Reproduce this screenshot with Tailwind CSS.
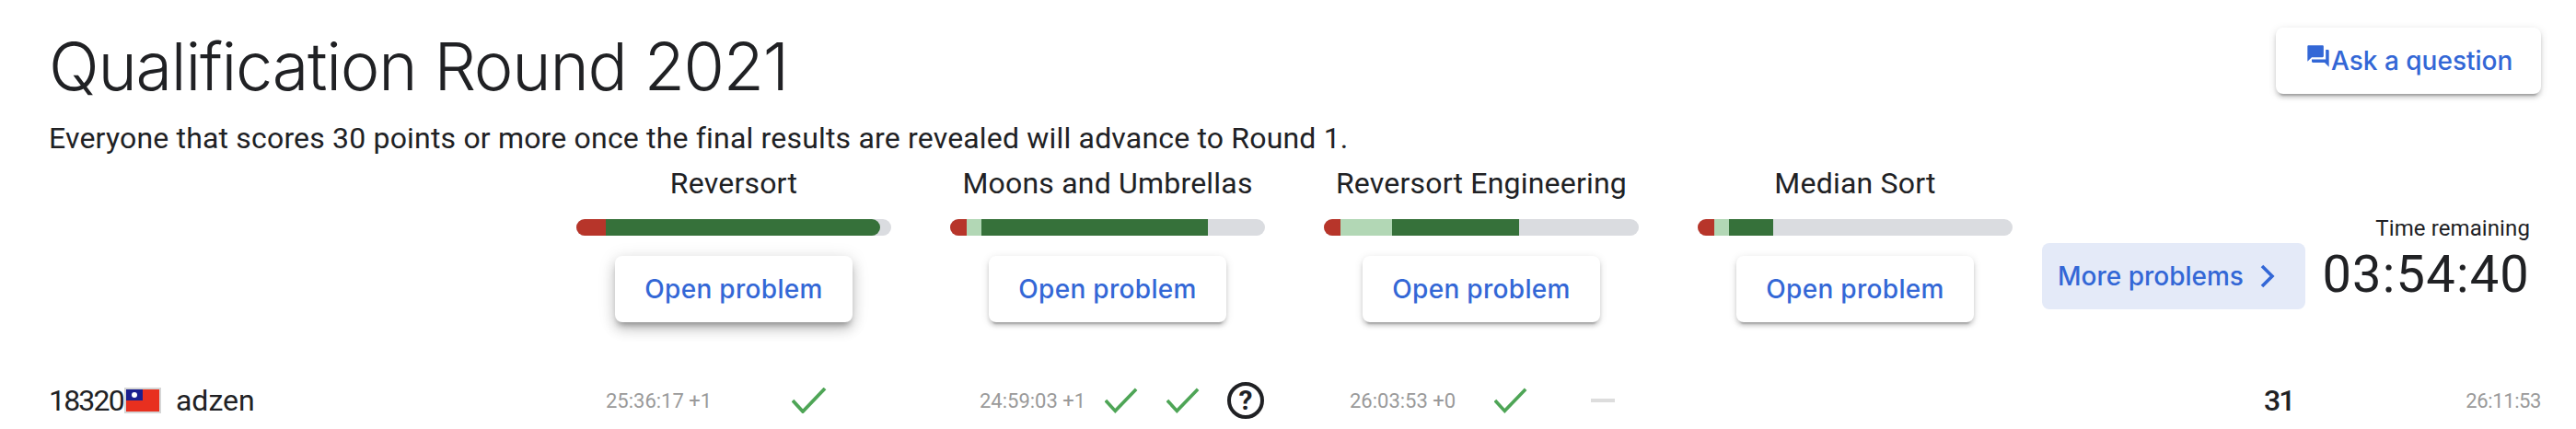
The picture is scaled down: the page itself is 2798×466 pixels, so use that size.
<!DOCTYPE html>
<html lang="en">
<head>
<meta charset="utf-8">
<script src="https://cdn.jsdelivr.net/npm/@tailwindcss/browser@4"></script>
</head>
<body class="bg-white">
<div class="w-[2798px] h-[466px] overflow-hidden pl-[53px] pr-[38px] pt-[30px] font-['Roboto',sans-serif] text-[#202124]">
  <header class="flex justify-between items-start h-[100px]">
    <h1 class="text-[72px] leading-[84px] font-light font-['Inter',sans-serif] tracking-[-1.25px]">Qualification Round 2021</h1>
    <button class="flex items-center h-[72px] w-[288px] px-[32px] rounded-[8px] bg-white text-[#3367d6] text-[28px] font-medium font-['Inter',sans-serif] whitespace-nowrap shadow-[0_6px_2px_-4px_rgba(0,0,0,.2),0_4px_4px_0_rgba(0,0,0,.14),0_2px_10px_0_rgba(0,0,0,.12)]">
      <svg class="w-[28px] h-[28px] shrink-0 -mt-[10px]" viewBox="0 0 24 24" fill="currentColor"><path d="M21 6h-2v9H6v2c0 .55.45 1 1 1h11l4 4V7c0-.55-.45-1-1-1zm-4 6V3c0-.55-.45-1-1-1H3c-.55 0-1 .45-1 1v14l4-4h10c.55 0 1-.45 1-1z"/></svg>
      <span>Ask a question</span>
    </button>
  </header>
  <p class="text-[32px] leading-[40px] tracking-[.18px]">Everyone that scores 30 points or more once the final results are revealed will advance to Round 1.</p>
  <section class="flex mt-[10px]">
    <div class="w-[573px] shrink-0"></div>
    <div class="flex gap-[64px]">
      <article class="w-[342px] flex flex-col items-center">
        <h2 class="text-[32px] leading-[38px] h-[38px] tracking-[.2px]">Reversort</h2>
        <div class="flex w-full h-[18px] mt-[20px] rounded-full overflow-hidden bg-[#dadce0]">
          <div class="w-[32px] bg-[#b7352a]"></div>
          <div class="w-[298px] bg-[#36713a] rounded-r-full"></div>
        </div>
        <button class="w-[258px] h-[72px] mt-[22px] rounded-[8px] bg-white text-[#3367d6] text-[28px] font-medium font-['Inter',sans-serif] tracking-[.3px] shadow-[0_6px_6px_-3px_rgba(0,0,0,.3),0_8px_14px_1px_rgba(0,0,0,.14),0_3px_18px_2px_rgba(0,0,0,.1)]">Open problem</button>
      </article>
      <article class="w-[342px] flex flex-col items-center">
        <h2 class="text-[32px] leading-[38px] h-[38px] tracking-[.2px]">Moons and Umbrellas</h2>
        <div class="flex w-full h-[18px] mt-[20px] rounded-full overflow-hidden bg-[#dadce0]">
          <div class="w-[18px] bg-[#b7352a]"></div>
          <div class="w-[16px] bg-[#b2d7b5]"></div>
          <div class="w-[246px] bg-[#36713a]"></div>
        </div>
        <button class="w-[258px] h-[72px] mt-[22px] rounded-[8px] bg-white text-[#3367d6] text-[28px] font-medium font-['Inter',sans-serif] tracking-[.3px] shadow-[0_6px_2px_-4px_rgba(0,0,0,.2),0_4px_4px_0_rgba(0,0,0,.14),0_2px_10px_0_rgba(0,0,0,.12)]">Open problem</button>
      </article>
      <article class="w-[342px] flex flex-col items-center">
        <h2 class="text-[32px] leading-[38px] h-[38px] tracking-[.2px]">Reversort Engineering</h2>
        <div class="flex w-full h-[18px] mt-[20px] rounded-full overflow-hidden bg-[#dadce0]">
          <div class="w-[18px] bg-[#b7352a]"></div>
          <div class="w-[56px] bg-[#b2d7b5]"></div>
          <div class="w-[138px] bg-[#36713a]"></div>
        </div>
        <button class="w-[258px] h-[72px] mt-[22px] rounded-[8px] bg-white text-[#3367d6] text-[28px] font-medium font-['Inter',sans-serif] tracking-[.3px] shadow-[0_6px_2px_-4px_rgba(0,0,0,.2),0_4px_4px_0_rgba(0,0,0,.14),0_2px_10px_0_rgba(0,0,0,.12)]">Open problem</button>
      </article>
      <article class="w-[342px] flex flex-col items-center">
        <h2 class="text-[32px] leading-[38px] h-[38px] tracking-[.2px]">Median Sort</h2>
        <div class="flex w-full h-[18px] mt-[20px] rounded-full overflow-hidden bg-[#dadce0]">
          <div class="w-[18px] bg-[#b7352a]"></div>
          <div class="w-[16px] bg-[#b2d7b5]"></div>
          <div class="w-[48px] bg-[#36713a]"></div>
        </div>
        <button class="w-[258px] h-[72px] mt-[22px] rounded-[8px] bg-white text-[#3367d6] text-[28px] font-medium font-['Inter',sans-serif] tracking-[.3px] shadow-[0_6px_2px_-4px_rgba(0,0,0,.2),0_4px_4px_0_rgba(0,0,0,.14),0_2px_10px_0_rgba(0,0,0,.12)]">Open problem</button>
      </article>
    </div>
    <button class="flex items-center w-[286px] h-[72px] ml-[32px] mt-[84px] pl-[17px] rounded-[8px] bg-[#e4eaf8] text-[#3367d6] text-[28px] font-medium font-['Inter',sans-serif] whitespace-nowrap">
      <span>More problems</span>
      <svg class="w-[16px] h-[26px] ml-[18px]" viewBox="0 0 16 26" fill="none" stroke="currentColor" stroke-width="3.6"><path d="M2 2l11 11L2 24"/></svg>
    </button>
    <div class="flex flex-col items-end flex-1 pr-[12px] mt-[50px]">
      <div class="text-[24px] leading-[36px] tracking-[.1px]">Time remaining</div>
      <div class="text-[56px] leading-[64px] tracking-[1.2px]">03:54:40</div>
    </div>
  </section>
  <section class="flex items-center h-[60px] mt-[55px]">
    <div class="flex items-center w-[573px] shrink-0 text-[32px]">
      <span class="tracking-[-1.8px]">18320</span>
      <span class="flex w-[40px] h-[28px] ml-[1px] border-2 border-[#d6d6d6] bg-[#e8301f]">
        <span class="flex items-center justify-center w-[18px] h-[12px] bg-[#1a1f8f]"><span class="w-[6px] h-[6px] rounded-full bg-white"></span></span>
      </span>
      <span class="ml-[16px]">adzen</span>
    </div>
    <div class="flex items-center w-[406px] shrink-0 pl-[32px]">
      <span class="text-[22px] text-[#9a9a9a] w-[202px]">25:36:17 +1</span>
      <svg class="w-[38px] h-[28px]" viewBox="0 0 38 28" fill="none" stroke="#4ea556" stroke-width="3.8"><path d="M1 14l11 12L36 1"/></svg>
    </div>
    <div class="flex items-center w-[406px] shrink-0 pl-[32px]">
      <span class="text-[22px] text-[#9a9a9a] w-[136px]">24:59:03 +1</span>
      <svg class="w-[36px] h-[28px]" viewBox="0 0 38 28" fill="none" stroke="#4ea556" stroke-width="3.8"><path d="M1 14l11 12L36 1"/></svg>
      <svg class="w-[36px] h-[28px] ml-[31px]" viewBox="0 0 38 28" fill="none" stroke="#4ea556" stroke-width="3.8"><path d="M1 14l11 12L36 1"/></svg>
      <span class="flex items-center justify-center w-[40px] h-[40px] ml-[30px] rounded-full border-[4px] border-[#202124] text-[30px] font-bold leading-none">?</span>
    </div>
    <div class="flex items-center w-[406px] shrink-0 pl-[28px]">
      <span class="text-[22px] text-[#9a9a9a] w-[157px]">26:03:53 +0</span>
      <svg class="w-[36px] h-[28px]" viewBox="0 0 38 28" fill="none" stroke="#4ea556" stroke-width="3.8"><path d="M1 14l11 12L36 1"/></svg>
      <span class="w-[26px] h-[4px] ml-[69px] bg-[#dddddd]"></span>
    </div>
    <div class="w-[406px] shrink-0"></div>
    <span class="ml-[209px] text-[32px] font-medium tracking-[-2px]">31</span>
    <span class="ml-auto text-[22px] text-[#9a9a9a] tracking-[-.4px]">26:11:53</span>
  </section>
</div>
</body>
</html>
